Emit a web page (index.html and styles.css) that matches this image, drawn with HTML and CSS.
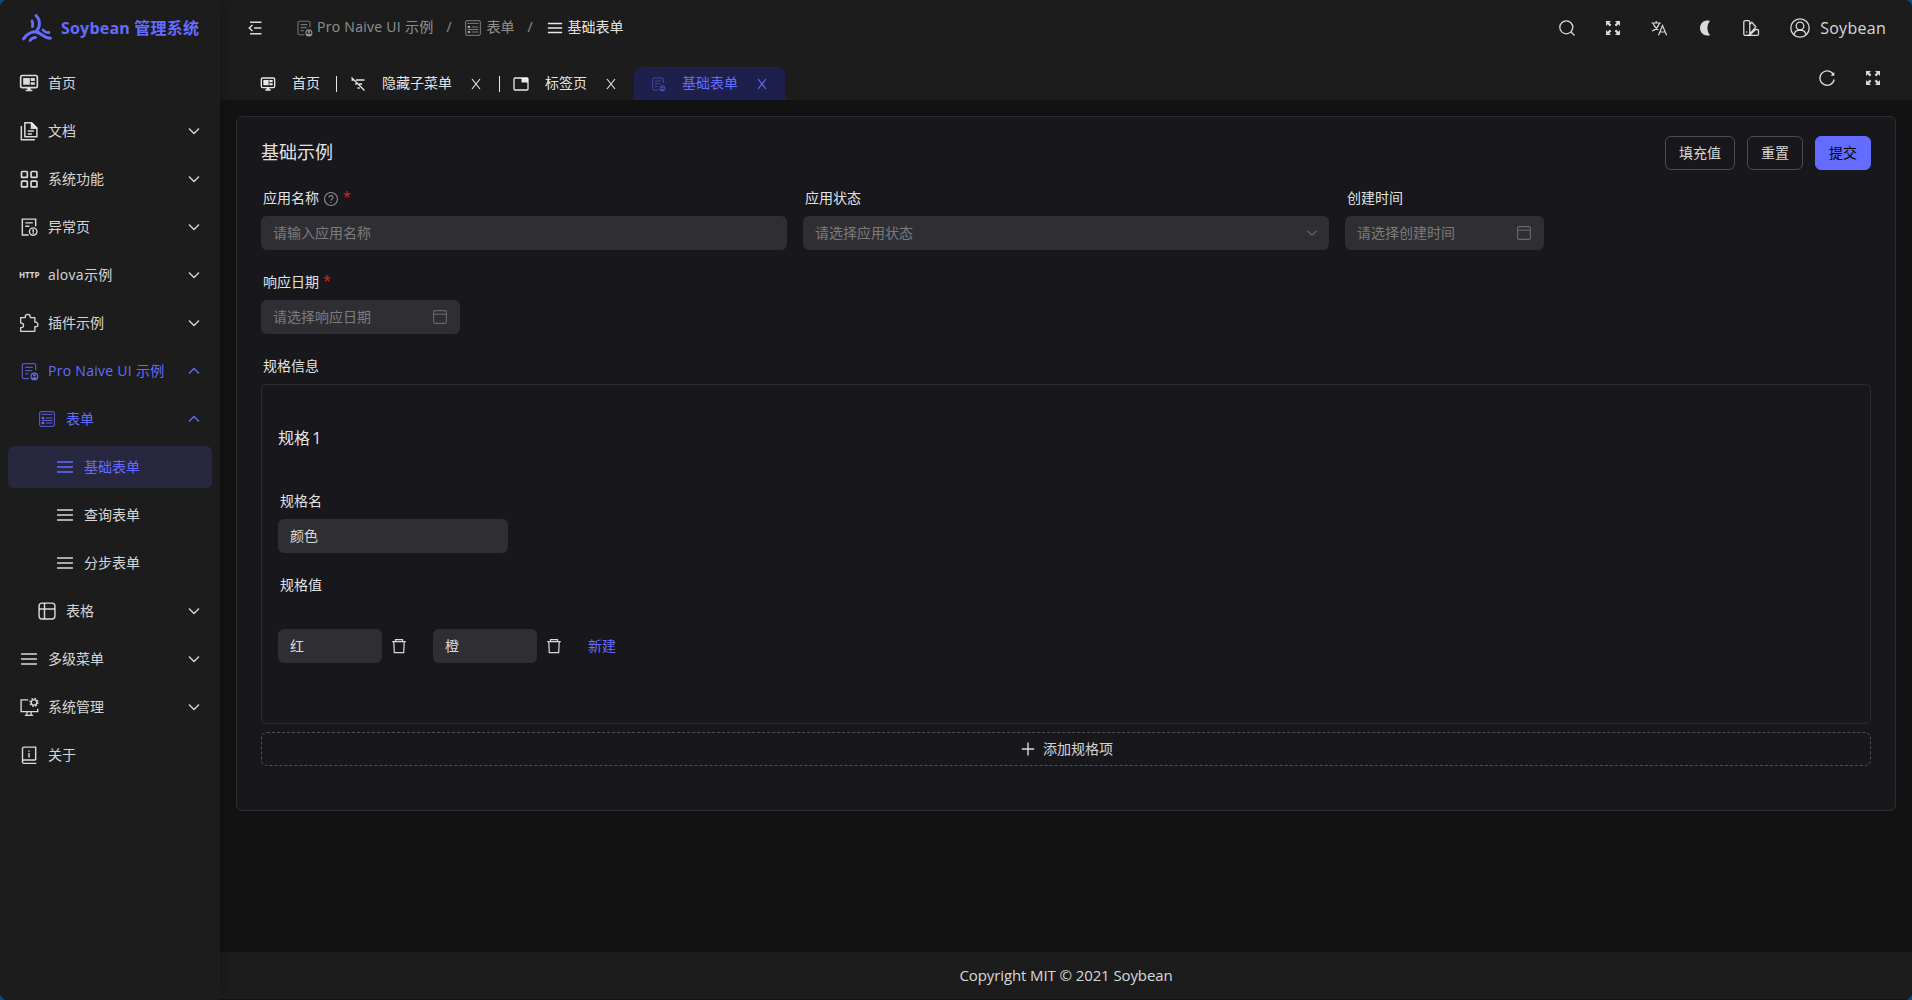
FILE: index.html
```
<!DOCTYPE html>
<html lang="zh-CN">
<head>
    <meta charset="UTF-8">
    <meta name="viewport" content="width=device-width, initial-scale=1.0">
    <title>基础表单 | Soybean 管理系统</title>
    <link rel="stylesheet" href="styles.css">
</head>
<body>

    <!-- iconos -->
    <svg class="sprite" aria-hidden="true">
        <symbol id="i-logo" viewBox="0 0 32 32">
            <g fill="none" stroke="currentColor" stroke-width="2.900" stroke-linecap="round">
                <path d="M15 3.500C19.500 8 19.500 14.500 15.500 19"/>
                <path d="M2.500 27C6 21 13 18.500 18 20.500"/>
                <path d="M15 20C20 20.500 22.500 26.500 29.500 26.200"/>
                <path d="M11 9C12.200 11 12 12.500 11.500 14.500"/>
                <path d="M22 18C23.500 20 26 20.800 27.800 20.500"/>
                <path d="M9 28.500C10.500 26.500 12.500 25.500 14.500 25.500"/>
            </g>
        </symbol>
        <symbol id="i-home" viewBox="0 0 24 24">
            <rect x="2" y="3" width="20" height="14.500" rx="2" fill="none" stroke="currentColor" stroke-width="2"/>
            <path fill="currentColor" d="M5 6h8v8H5zM14 6h5v3.500h-5zM14 11h5v3h-5zM10 18h4v2h2v2H8v-2h2z"/>
        </symbol>
        <symbol id="i-doc" viewBox="0 0 24 24">
            <g fill="none" stroke="currentColor" stroke-width="1.800">
                <path d="M7 2h8l6.500 6.500V19H7z" stroke-linejoin="round"/>
                <path d="M2.800 6v16.500H19M10.500 12h7.500M10.500 15.500h5"/>
            </g>
            <path fill="currentColor" d="M14 2h2l5.500 6v1.500H14z"/>
        </symbol>
        <symbol id="i-grid" viewBox="0 0 24 24">
            <g fill="none" stroke="currentColor" stroke-width="2">
                <rect x="3" y="3" width="7" height="7" rx=".8"/><rect x="14.500" y="3" width="7" height="7" rx=".8"/>
                <rect x="3" y="14.500" width="7" height="7" rx=".8"/><rect x="14.500" y="14.500" width="7" height="7" rx=".8"/>
            </g>
        </symbol>
        <symbol id="i-error" viewBox="0 0 24 24">
            <g fill="none" stroke="currentColor" stroke-width="1.700">
                <path d="M20 11V2.500H4v19h7.500M7.500 7h9M7.500 11h5"/>
                <circle cx="17" cy="17.500" r="4.500"/><path d="M17 14.500v4M17 19.200v1.300"/>
            </g>
        </symbol>
        <symbol id="i-plugin" viewBox="0 0 24 24">
            <path fill="none" stroke="currentColor" stroke-width="1.500" stroke-linejoin="round" d="M2 5.500h5.500V4.500a3 3 0 0 1 6 0v1H19V11h1a2.700 2.700 0 0 1 0 5.400h-1V22H2v-4.500h.8a2.700 2.700 0 0 0 0-5.400H2z"/>
        </symbol>
        <symbol id="i-pro" viewBox="0 0 24 24">
            <path fill="none" stroke="currentColor" stroke-width="1.500" opacity=".75" d="M20 11V5a2 2 0 0 0-2-2H6a2 2 0 0 0-2 2v14a2 2 0 0 0 2 2h6M7.500 7.500h9M7.500 11.500h8M7.500 15.500h4"/>
            <circle cx="18.500" cy="18.500" r="4" fill="none" stroke="currentColor" stroke-width="1.400"/>
            <circle cx="18.500" cy="17.200" r="1.500" fill="currentColor"/>
            <path fill="currentColor" d="M15.500 20.200c1.500-1 4.500-1 6 0-1 2.600-5 2.600-6 0z"/>
        </symbol>
        <symbol id="i-form" viewBox="0 0 24 24">
            <g fill="none" stroke="currentColor" stroke-width="1.300">
                <rect x="1" y="1" width="22" height="22" rx="2"/>
                <path d="M3.500 5h17M10 10.500h10M10 18h10M3.500 10.500h4.500M3.500 18h4.500M4 14.200h16"/>
            </g>
            <circle cx="6" cy="10.500" r="1.900" fill="currentColor"/><circle cx="6" cy="18" r="1.900" fill="currentColor"/>
        </symbol>
        <symbol id="i-menu" viewBox="0 0 24 24">
            <path fill="none" stroke="currentColor" stroke-width="1.900" d="M2.500 6h19M2.500 12h19M2.500 18h19"/>
        </symbol>
        <symbol id="i-table" viewBox="0 0 24 24">
            <g fill="none" stroke="currentColor" stroke-width="1.700">
                <rect x="2.500" y="2.500" width="19" height="19" rx="3.500"/><path d="M2.500 9.500h19M9 2.500v19"/>
            </g>
        </symbol>
        <symbol id="i-manage" viewBox="0 0 24 24">
            <g fill="none" stroke="currentColor" stroke-width="1.600">
                <path d="M11 3.500H2.500V17.500h20V14M9.500 17.500v4M14.500 17.500v4M7 22h10"/>
                <circle cx="18" cy="6.500" r="3.300"/>
            </g>
            <circle cx="18" cy="6.500" r="4.800" fill="none" stroke="currentColor" stroke-width="1.600" stroke-dasharray="1.900 1.870"/>
        </symbol>
        <symbol id="i-about" viewBox="0 0 24 24">
            <path fill="none" stroke="currentColor" stroke-width="1.700" d="M20 18V2.500H6A1.800 1.800 0 0 0 4.200 4.300V20A1.700 1.700 0 0 0 6 22h14.800M4.200 19A1.800 1.800 0 0 1 6 18h14M12 6.500v1.700M12 9.500V15"/>
        </symbol>
        <symbol id="i-down" viewBox="0 0 16 16">
            <path fill="none" stroke="currentColor" stroke-width="1.300" d="M3 5.500l5 5 5-5"/>
        </symbol>
        <symbol id="i-up" viewBox="0 0 16 16">
            <path fill="none" stroke="currentColor" stroke-width="1.300" d="M3 10.500l5-5 5 5"/>
        </symbol>
        <symbol id="i-fold" viewBox="0 0 18 18">
            <path fill="none" stroke="currentColor" stroke-width="1.500" d="M4 3.300h11.500M8 9h7.500M4 14.700h11.500M6.500 6L3.300 9l3.200 3"/>
        </symbol>
        <symbol id="i-search" viewBox="0 0 18 18">
            <g fill="none" stroke="currentColor" stroke-width="1.300"><circle cx="8.300" cy="8.300" r="6.500"/><path d="M13 13l3.500 3.500"/></g>
        </symbol>
        <symbol id="i-full" viewBox="0 0 18 18">
            <path fill="currentColor" d="M2 2h5L5.300 3.700 7.400 5.800 5.800 7.400 3.700 5.300 2 7zM16 2v5l-1.700-1.700-2.100 2.100-1.600-1.600 2.100-2.100L11 2zM2 16v-5l1.700 1.700 2.100-2.100 1.600 1.600-2.100 2.100L7 16zM16 16h-5l1.700-1.700-2.100-2.100 1.600-1.600 2.100 2.100L16 11z"/>
        </symbol>
        <symbol id="i-lang" viewBox="0 0 18 18">
            <path fill="none" stroke="currentColor" stroke-width="1.200" d="M1.500 4h9.500M6.200 2v2M3.200 4c1 3.500 3 5.500 5.300 6.500M9.300 4c-.8 3.500-3.300 6.300-7.300 8M8.500 16.200L12.500 6.500 16.600 16.200M9.900 13h5.300"/>
        </symbol>
        <symbol id="i-moon" viewBox="0 0 18 18">
            <path fill="currentColor" d="M14 1.800A7.600 7.600 0 1 0 14 16.200 11 11 0 0 1 14 1.800z"/>
        </symbol>
        <symbol id="i-theme" viewBox="0 0 18 18">
            <g fill="none" stroke="currentColor" stroke-width="1.300">
                <rect x="1.800" y="1.600" width="6" height="14.800" rx="1.500"/>
                <path d="M7.800 5.200l2-1.900 4 4.500-6 7M12 10.500h3.200q1.300 0 1.300 1.300v3.300q0 1.300-1.300 1.300H5M8.200 15.600l5.500-5.100"/>
            </g>
            <circle cx="4.800" cy="13" r=".8" fill="currentColor"/>
        </symbol>
        <symbol id="i-user" viewBox="0 0 20 20">
            <g fill="none" stroke="currentColor" stroke-width="1.300">
                <circle cx="10" cy="10" r="9.200"/><circle cx="10" cy="8" r="3.800"/><path d="M4.200 16.800c.5-6.300 11.100-6.300 11.600 0"/>
            </g>
        </symbol>
        <symbol id="i-refresh" viewBox="0 0 18 18">
            <path fill="none" stroke="currentColor" stroke-width="1.300" d="M15.300 5.300A7.200 7.200 0 1 0 16.200 10.500"/>
            <path fill="currentColor" d="M16.300 3v3.700h-3.700z"/>
        </symbol>
        <symbol id="i-hide" viewBox="0 0 16 16">
            <path fill="none" stroke="currentColor" stroke-width="1.300" d="M1.500 1.500l13 13M1.500 4h1.800M6 4h8.500M5.200 8h1.500M9.200 8h2.800M7.500 12h2.200"/>
        </symbol>
        <symbol id="i-tab" viewBox="0 0 16 16">
            <rect x="1" y="2" width="14" height="12" rx="1" fill="none" stroke="currentColor" stroke-width="1.300"/>
            <path fill="currentColor" d="M8.500 2H15v4.500H8.500z"/>
        </symbol>
        <symbol id="i-close" viewBox="0 0 12 12">
            <path fill="none" stroke="currentColor" stroke-width="1.100" d="M2 1l8 10M10 1L2 11"/>
        </symbol>
        <symbol id="i-help" viewBox="0 0 16 16">
            <g fill="none" stroke="currentColor" stroke-width="1.100">
                <circle cx="8" cy="8" r="6.500"/><path d="M6 6.600c0-2.700 4-2.500 4-.2C10 7.800 8 8 8 9.600M8 10.700v1.200"/>
            </g>
        </symbol>
        <symbol id="i-date" viewBox="0 0 16 16">
            <g fill="none" stroke="currentColor" stroke-width="1.100"><rect x="1.600" y="1.600" width="12.800" height="12.800" rx="1.500"/><path d="M1.600 5.200h12.800"/></g>
        </symbol>
        <symbol id="i-trash" viewBox="0 0 16 16">
            <path fill="none" stroke="currentColor" stroke-width="1.200" d="M1.200 3.600h13.600M4.500 3.500V1.600h7v1.900M2.800 4l.5 10.600h9.400L13.200 4"/>
        </symbol>
        <symbol id="i-plus" viewBox="0 0 14 14">
            <path fill="none" stroke="currentColor" stroke-width="1.400" d="M7 .5v13M.8 7h12.400"/>
        </symbol>
    </svg>

    <div class="layout">
        <aside class="sider">
            <div class="logo">
                <svg class="logo-icon"><use href="#i-logo"/></svg>
                <h1>Soybean 管理系统</h1>
            </div>
            <ul class="menu">
                <li class="menu-item"><svg class="icon"><use href="#i-home"/></svg><span>首页</span></li>
                <li class="menu-item"><svg class="icon"><use href="#i-doc"/></svg><span>文档</span><svg class="arrow"><use href="#i-down"/></svg></li>
                <li class="menu-item"><svg class="icon"><use href="#i-grid"/></svg><span>系统功能</span><svg class="arrow"><use href="#i-down"/></svg></li>
                <li class="menu-item"><svg class="icon"><use href="#i-error"/></svg><span>异常页</span><svg class="arrow"><use href="#i-down"/></svg></li>
                <li class="menu-item"><b class="http">HTTP</b><span class="latin">alova示例</span><svg class="arrow"><use href="#i-down"/></svg></li>
                <li class="menu-item"><svg class="icon"><use href="#i-plugin"/></svg><span>插件示例</span><svg class="arrow"><use href="#i-down"/></svg></li>
                <li class="menu-item open"><svg class="icon"><use href="#i-pro"/></svg><span class="latin">Pro Naive UI 示例</span><svg class="arrow"><use href="#i-up"/></svg></li>
                <li class="menu-item level-2 open"><svg class="icon small"><use href="#i-form"/></svg><span>表单</span><svg class="arrow"><use href="#i-up"/></svg></li>
                <li class="menu-item level-3 active"><svg class="icon"><use href="#i-menu"/></svg><span>基础表单</span></li>
                <li class="menu-item level-3"><svg class="icon"><use href="#i-menu"/></svg><span>查询表单</span></li>
                <li class="menu-item level-3"><svg class="icon"><use href="#i-menu"/></svg><span>分步表单</span></li>
                <li class="menu-item level-2"><svg class="icon"><use href="#i-table"/></svg><span>表格</span><svg class="arrow"><use href="#i-down"/></svg></li>
                <li class="menu-item"><svg class="icon"><use href="#i-menu"/></svg><span>多级菜单</span><svg class="arrow"><use href="#i-down"/></svg></li>
                <li class="menu-item"><svg class="icon"><use href="#i-manage"/></svg><span>系统管理</span><svg class="arrow"><use href="#i-down"/></svg></li>
                <li class="menu-item"><svg class="icon"><use href="#i-about"/></svg><span>关于</span></li>
            </ul>
        </aside>

        <div class="main">
            <header class="header">
                <svg class="tool-icon"><use href="#i-fold"/></svg>
                <nav class="breadcrumb">
                    <span class="crumb latin"><svg><use href="#i-pro"/></svg>Pro Naive UI 示例</span>
                    <span class="slash">/</span>
                    <span class="crumb"><svg class="tight"><use href="#i-form"/></svg>表单</span>
                    <span class="slash">/</span>
                    <span class="crumb current"><svg><use href="#i-menu"/></svg>基础表单</span>
                </nav>
                <div class="tools">
                    <svg class="tool-icon"><use href="#i-search"/></svg>
                    <svg class="tool-icon"><use href="#i-full"/></svg>
                    <svg class="tool-icon"><use href="#i-lang"/></svg>
                    <svg class="tool-icon"><use href="#i-moon"/></svg>
                    <svg class="tool-icon"><use href="#i-theme"/></svg>
                    <span class="user latin"><svg><use href="#i-user"/></svg>Soybean</span>
                </div>
            </header>

            <div class="tabs">
                <div class="tab"><svg><use href="#i-home"/></svg><span>首页</span></div>
                <i class="divider"></i>
                <div class="tab"><svg><use href="#i-hide"/></svg><span>隐藏子菜单</span><svg class="close"><use href="#i-close"/></svg></div>
                <i class="divider"></i>
                <div class="tab"><svg><use href="#i-tab"/></svg><span>标签页</span><svg class="close"><use href="#i-close"/></svg></div>
                <div class="tab active"><svg><use href="#i-pro"/></svg><span>基础表单</span><svg class="close"><use href="#i-close"/></svg></div>
                <div class="tab-tools">
                    <svg class="tool-icon"><use href="#i-refresh"/></svg>
                    <svg class="tool-icon"><use href="#i-full"/></svg>
                </div>
            </div>

            <main class="content">
                <section class="card">
                    <div class="card-header">
                        <h2>基础示例</h2>
                        <button class="btn">填充值</button>
                        <button class="btn">重置</button>
                        <button class="btn primary">提交</button>
                    </div>

                    <div class="form-grid">
                        <div class="field">
                            <label>应用名称<svg><use href="#i-help"/></svg><em>*</em></label>
                            <div class="input placeholder">请输入应用名称</div>
                        </div>
                        <div class="field">
                            <label>应用状态</label>
                            <div class="input placeholder select">请选择应用状态<svg><use href="#i-down"/></svg></div>
                        </div>
                        <div class="field">
                            <label>创建时间</label>
                            <div class="input placeholder date">请选择创建时间<svg><use href="#i-date"/></svg></div>
                        </div>
                        <div class="field">
                            <label>响应日期<em>*</em></label>
                            <div class="input placeholder date">请选择响应日期<svg><use href="#i-date"/></svg></div>
                        </div>
                    </div>

                    <div class="field">
                        <label>规格信息</label>
                        <div class="spec">
                            <h3>规格 1</h3>
                            <div class="field">
                                <label>规格名</label>
                                <div class="input name">颜色</div>
                            </div>
                            <label class="values-label">规格值</label>
                            <div class="values">
                                <div class="input value">红</div>
                                <svg><use href="#i-trash"/></svg>
                                <div class="input value">橙</div>
                                <svg><use href="#i-trash"/></svg>
                                <a class="link">新建</a>
                            </div>
                        </div>
                        <button class="add"><svg><use href="#i-plus"/></svg>添加规格项</button>
                    </div>
                </section>
            </main>

            <footer class="footer">Copyright MIT © 2021 Soybean</footer>
        </div>
    </div>

</body>
</html>
```

FILE: styles.css
```
* {
    box-sizing: border-box;
}
body {
    margin: 0;
    background-color: #0d4a78;
    color: rgba(255, 255, 255, 0.84);
    font-family: "Open Sans", "Noto Sans CJK SC", sans-serif;
    font-size: 14px;
    line-height: 22px;
}
h1, h2, h3, ul {
    margin: 0;
    padding: 0;
    font-weight: 400;
}
svg {
    flex: none;
    width: 16px;
    height: 16px;
}
.sprite {
    display: none;
}
.latin {
    letter-spacing: 0.28px;
}
.layout {
    display: flex;
    height: 1000px;
    border-radius: 8px;
    overflow: hidden;
    background-color: #121212;
}

/* menu lateral */
.sider {
    width: 220px;
    background-color: #1c1c1c;
    box-shadow: 2px 0 8px rgba(0, 0, 0, 0.2);
    z-index: 1;
}
.logo {
    display: flex;
    align-items: center;
    gap: 8px;
    height: 56px;
    padding-left: 21px;
    color: #646cff;
}
.logo-icon {
    width: 32px;
    height: 32px;
}
.logo h1 {
    font-size: 16px;
    font-weight: 700;
    letter-spacing: 0.2px;
    white-space: nowrap;
}
.menu {
    list-style: none;
    padding: 6px 8px;
}
.menu-item {
    display: flex;
    align-items: center;
    height: 42px;
    margin-bottom: 6px;
    padding: 0 10px 0 11px;
    border-radius: 6px;
    white-space: nowrap;
}
.menu-item .icon {
    width: 20px;
    height: 20px;
    margin-right: 9px;
}
.menu-item .small {
    width: 16px;
    height: 16px;
    margin: 0 11px 0 2px;
}
.menu-item .arrow {
    margin-left: auto;
}
.http {
    width: 20px;
    margin-right: 9px;
    font-size: 8px;
}
.level-2 {
    padding-left: 29px;
}
.level-3 {
    padding-left: 47px;
}
.open {
    color: #646cff;
}
.menu-item.active {
    background-color: #272740;
    color: #646cff;
}

/* cabecera */
.main {
    display: flex;
    flex: 1;
    flex-direction: column;
}
.header {
    display: flex;
    align-items: center;
    height: 56px;
    padding: 0 26px;
    background-color: #1c1c1c;
}
.tool-icon {
    width: 18px;
    height: 18px;
}
.breadcrumb {
    display: flex;
    align-items: center;
    margin-left: 31px;
    padding-bottom: 2px;
    color: rgba(255, 255, 255, 0.52);
}
.crumb {
    display: flex;
    align-items: center;
    gap: 4px;
}
.crumb svg {
    width: 18px;
    height: 18px;
    margin-top: 2px;
}
.crumb .tight {
    width: 16px;
    height: 16px;
    margin-right: 2px;
}
.crumb.current {
    color: rgba(255, 255, 255, 0.9);
}
.slash {
    width: 31px;
    text-align: center;
}
.tools {
    display: flex;
    align-items: center;
    gap: 28px;
    margin-left: auto;
}
.user {
    display: flex;
    align-items: center;
    gap: 10px;
    margin-left: 2px;
    font-size: 16px;
}
.user svg {
    width: 20px;
    height: 20px;
}

/* pestañas */
.tabs {
    display: flex;
    align-items: flex-end;
    height: 44px;
    padding: 0 30px 0 24px;
    background-color: #1c1c1c;
}
.tab {
    display: flex;
    align-items: center;
    gap: 16px;
    height: 33px;
    padding: 0 16px;
    color: rgba(255, 255, 255, 0.9);
}
.tab span {
    margin-bottom: 2px;
}
.tab .close {
    width: 12px;
    height: 12px;
    margin-left: 2px;
}
.divider {
    width: 1px;
    height: 16px;
    margin-bottom: 8px;
    background-color: #e8e8e8;
}
.divider + .tab {
    padding: 0 17px 0 13px;
}
.tab.active {
    position: relative;
    padding-right: 17px;
    border-radius: 8px 8px 0 0;
    background-color: #1e1f4b;
    color: #646cff;
}
.tab.active svg:first-child {
    opacity: 0.7;
}
.tab.active::before,
.tab.active::after {
    content: "";
    position: absolute;
    bottom: 0;
    width: 5px;
    height: 5px;
}
.tab.active::before {
    left: -5px;
    background: radial-gradient(circle at 0 0, transparent 5px, #1e1f4b 5px);
}
.tab.active::after {
    right: -5px;
    background: radial-gradient(circle at 100% 0, transparent 5px, #1e1f4b 5px);
}
.tab-tools {
    display: flex;
    gap: 28px;
    height: 31px;
    margin-left: auto;
}

/* contenido */
.content {
    flex: 1;
    padding: 16px;
}
.card {
    height: 695px;
    padding: 19px 24px;
    border: 1px solid #2d2d30;
    border-radius: 6px;
    background-color: #18181c;
}
.card-header {
    display: flex;
    align-items: center;
    gap: 12px;
    margin-bottom: 16px;
}
.card-header h2 {
    margin: 0 auto 2px 0;
    font-size: 18px;
    color: rgba(255, 255, 255, 0.9);
}
.btn {
    height: 34px;
    padding: 0 13px;
    border: 1px solid #4d4d51;
    border-radius: 6px;
    background: none;
    color: inherit;
    font: inherit;
}
.btn.primary {
    border-color: #646cff;
    background-color: #646cff;
    color: #000;
}
.form-grid {
    display: grid;
    grid-template-columns: repeat(3, 1fr);
    column-gap: 16px;
}
.form-grid .field {
    height: 84px;
}
label {
    display: flex;
    align-items: center;
    height: 30px;
    padding: 0 0 6px 2px;
    color: rgba(255, 255, 255, 0.9);
}
label svg {
    margin: 1px 0 0 4px;
    color: #8f8f92;
}
label em {
    margin: -3px 0 0 4px;
    color: #e02020;
    font-style: normal;
}
.input {
    display: flex;
    align-items: center;
    justify-content: space-between;
    height: 34px;
    padding: 0 12px;
    border-radius: 6px;
    background-color: #2f2f33;
}
.placeholder {
    color: #7b7b7e;
}
.input svg {
    color: #69696c;
}
.select {
    padding-right: 10px;
}
.select svg {
    width: 14px;
    height: 14px;
}
.date {
    width: 199px;
}
.spec {
    height: 340px;
    padding: 42px 16px 0;
    border: 1px solid #2d2d30;
    border-radius: 6px;
}
.spec h3 {
    margin-bottom: 38px;
    font-size: 16px;
    word-spacing: -2px;
    color: rgba(255, 255, 255, 0.9);
}
.spec label {
    height: 32px;
    padding-bottom: 4px;
}
.name {
    width: 230px;
}
.values-label {
    margin-top: 18px;
}
.values {
    display: flex;
    align-items: center;
    margin-top: 26px;
}
.value {
    width: 104px;
}
.values svg {
    margin: 0 26px 0 9px;
}
.link {
    color: #646cff;
}
.add {
    display: flex;
    align-items: center;
    justify-content: center;
    gap: 8px;
    width: 100%;
    height: 34px;
    margin-top: 8px;
    padding: 0 4px 0 6px;
    border: 1px dashed #505054;
    border-radius: 6px;
    background: none;
    color: inherit;
    font: inherit;
}
.add svg {
    width: 14px;
    height: 14px;
}
.footer {
    height: 48px;
    background-color: #1c1c1c;
    box-shadow: inset 0 -1px #111;
    font-size: 15px;
    line-height: 47px;
    letter-spacing: -0.1px;
    text-align: center;
}
```
